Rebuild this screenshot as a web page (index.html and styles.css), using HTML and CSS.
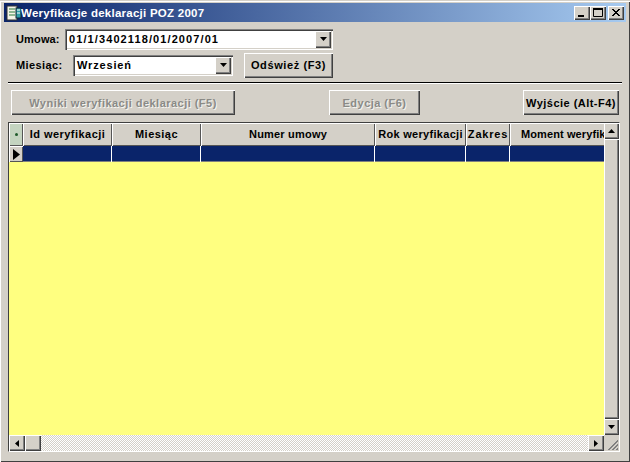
FILE: index.html
```html
<!DOCTYPE html>
<html lang="pl">
<head>
<meta charset="utf-8">
<title>Weryfikacje deklaracji POZ 2007</title>
<link rel="stylesheet" href="styles.css">
</head>
<body>
<div class="window">
  <div class="titlebar">
    <svg class="appicon" width="16" height="16" viewBox="0 0 16 16"><rect x="1" y="1" width="10" height="14" fill="#f4f4e8" stroke="#333"/><path d="M3 4h6M3 7h6M3 10h6" stroke="#2a7a3a"/><rect x="10" y="3" width="5" height="10" fill="#2f9fa8" stroke="#123"/><path d="M11 5h3M11 8h3" stroke="#fff"/></svg>
    <span class="title">Weryfikacje deklaracji POZ 2007</span>
    <div class="winbtns">
      <span class="winbtn"><svg width="16" height="14" viewBox="0 0 16 14"><rect x="4" y="9" width="6" height="2" fill="#000"/></svg></span>
      <span class="winbtn"><svg width="16" height="14" viewBox="0 0 16 14"><path d="M3.500 2.500h9v8h-9z" fill="none" stroke="#000"/><rect x="3" y="2" width="10" height="2" fill="#000"/></svg></span>
      <span class="winbtn close"><svg width="16" height="14" viewBox="0 0 16 14"><path d="M4 3l7 7M5 3l7 7M11 3l-7 7M12 3l-7 7" stroke="#000" fill="none"/></svg></span>
    </div>
  </div>
  <div class="form">
    <div class="row row-umowa">
      <span class="label label-umowa">Umowa:</span>
      <div class="combo combo-umowa"><span class="value value-umowa">01/1/3402118/01/2007/01</span><span class="ddbtn"><svg width="7" height="4" viewBox="0 0 7 4"><path d="M0 0h7L3.500 4z" fill="#000"/></svg></span></div>
    </div>
    <div class="row row-miesiac">
      <span class="label label-miesiac">Miesiąc:</span>
      <div class="combo combo-miesiac"><span class="value value-miesiac">Wrzesień</span><span class="ddbtn"><svg width="7" height="4" viewBox="0 0 7 4"><path d="M0 0h7L3.500 4z" fill="#000"/></svg></span></div>
      <button class="btn btn-refresh">Odśwież (F3)</button>
    </div>
    <div class="rule"></div>
    <div class="actions">
      <button class="btn btn-results" disabled>Wyniki weryfikacji deklaracji (F5)</button>
      <button class="btn btn-edit" disabled>Edycja (F6)</button>
      <button class="btn btn-exit">Wyjście (Alt-F4)</button>
    </div>
  </div>
  <div class="grid">
    <div class="grid-main">
      <div class="grid-data">
        <div class="g-row g-head">
          <div class="cell c0"><span class="dot"></span></div>
          <div class="cell c1">Id weryfikacji</div>
          <div class="cell c2">Miesiąc</div>
          <div class="cell c3">Numer umowy</div>
          <div class="cell c4">Rok weryfikacji</div>
          <div class="cell c5">Zakres</div>
          <div class="cell c6">Moment weryfikacji</div>
        </div>
        <div class="g-row g-sel">
          <div class="cell c0"><svg width="7" height="11" viewBox="0 0 7 11"><path d="M0 0l7 5.500L0 11z" fill="#000"/></svg></div>
          <div class="cell c1"></div><div class="cell c2"></div><div class="cell c3"></div><div class="cell c4"></div><div class="cell c5"></div><div class="cell c6"></div>
        </div>
        <div class="g-empty"></div>
      </div>
      <div class="vscroll">
        <span class="sbtn"><svg width="7" height="4" viewBox="0 0 7 4"><path d="M3.500 0L7 4H0z" fill="#000"/></svg></span>
        <span class="vtrack"></span>
        <span class="sbtn"><svg width="7" height="4" viewBox="0 0 7 4"><path d="M0 0h7L3.500 4z" fill="#000"/></svg></span>
      </div>
    </div>
    <div class="hscroll">
      <span class="sbtn"><svg width="4" height="7" viewBox="0 0 4 7"><path d="M4 0v7L0 3.500z" fill="#000"/></svg></span>
      <span class="sbtn thumb"></span>
      <span class="htrack"></span>
      <span class="sbtn"><svg width="4" height="7" viewBox="0 0 4 7"><path d="M0 0v7l4-3.500z" fill="#000"/></svg></span>
      <span class="grip"><svg width="13" height="13" viewBox="0 0 13 13"><path d="M12 2L2 12M12 3L3 12M12 6L6 12M12 7L7 12M12 10L10 12M12 11L11 12" stroke="#808080"/></svg></span>
    </div>
  </div>
</div>
</body>
</html>
```
FILE: styles.css
```css
* { box-sizing: border-box; }
html, body { margin: 0; padding: 0; }
body { width: 630px; height: 462px; overflow: hidden; font-family: "Liberation Sans", Arial, sans-serif; font-size: 11px; font-weight: 700; color: #000; }
.window { width: 630px; height: 462px; background: #d4d0c8; padding: 3px 4px 0 4px; border-top: 1px solid #d4d0c8; display: flex; flex-direction: column; box-shadow: inset 1px 1px 0 #fff, inset -1px -1px 0 #404040; }
.titlebar { height: 19px; margin-top: -1px; display: flex; align-items: center; padding: 0 2px; background: linear-gradient(90deg, #0a246a, #a6caf0); color: #fff; flex: none; }
.appicon { flex: none; }
.title { font-size: 11.5px; letter-spacing: 0.25px; white-space: nowrap; margin-left: -1px; }
.winbtns { margin-left: auto; display: flex; }
.winbtn { width: 16px; height: 14px; background: #d4d0c8; box-shadow: inset 1px 1px 0 #fff, inset -1px -1px 0 #404040, inset -2px -2px 0 #808080; display: block; }
.winbtn svg { display: block; }
.close { margin-left: 2px; }
.form { padding: 7px 0 0 12px; flex: none; }
.row { display: flex; align-items: center; }
.row-umowa { height: 20px; }
.row-miesiac { height: 24px; margin-top: 4px; }
.label { white-space: nowrap; flex: none; }
.label-umowa { width: 49px; letter-spacing: 0.15px; }
.label-miesiac { width: 57px; letter-spacing: 0.4px; }
.combo { height: 21px; background: #fff; display: flex; align-items: center; justify-content: space-between; padding: 2px; box-shadow: inset 1px 1px 0 #808080, inset 2px 2px 0 #404040, inset -1px -1px 0 #fff, inset -2px -2px 0 #d4d0c8; }
.combo-umowa { width: 268px; }
.combo-miesiac { width: 160px; }
.value { padding-left: 2px; white-space: nowrap; }
.value-umowa { letter-spacing: 1.1px; }
.value-miesiac { letter-spacing: 0.85px; }
.ddbtn { width: 16px; height: 17px; background: #d4d0c8; display: flex; align-items: center; justify-content: center; box-shadow: inset 1px 1px 0 #fff, inset -1px -1px 0 #404040, inset -2px -2px 0 #808080; }
.btn { font: inherit; letter-spacing: 0.47px; color: #000; background: #d4d0c8; border: 0; padding: 0; height: 25px; white-space: nowrap; box-shadow: inset 1px 1px 0 #fff, inset -1px -1px 0 #404040, inset -2px -2px 0 #808080; }
.btn:disabled { color: #8a8a86; text-shadow: 1px 1px 0 #f4f4f0; }
.btn-refresh { width: 89px; margin-left: 11px; letter-spacing: 0.6px; }
.rule { width: 614px; height: 1px; margin: 5px 0 0 -8px; background: #000; box-shadow: 0 1px 0 #fff; }
.actions { display: flex; margin-top: 7px; margin-left: -5px; }
.btn-results { width: 224px; }
.btn-edit { width: 91px; margin-left: 94px; }
.btn-exit { width: 96px; margin-left: 103px; }
.grid { margin: 7px 6px 0 4px; height: 330px; flex: none; display: flex; flex-direction: column; border: 1px solid #808080; border-top-color: #404040; border-left-color: #404040; border-right-color: #fff; border-bottom-color: #fff; }
.grid-main { display: flex; flex: 1; min-height: 0; }
.grid-data { width: 596px; background: #ffff80; display: flex; flex-direction: column; overflow: hidden; }
.g-row { display: flex; flex: none; }
.g-head { height: 23px; background: #d4d0c8; }
.g-head .cell { line-height: 22px; box-shadow: inset 1px 1px 0 #fff, inset -1px -1px 0 #555; text-align: center; letter-spacing: 0.47px; }
.g-sel { height: 16px; background: #0a246a; }
.g-sel .cell { box-shadow: inset -1px 0 0 #fff, inset 0 -1px 0 #808080; }
.g-sel .c0 { background: #d4d0c8; display: flex; align-items: center; justify-content: center; box-shadow: inset 1px 1px 0 #fff, inset -1px -1px 0 #555; }
.g-empty { flex: 1; }
.cell { flex: none; overflow: hidden; white-space: nowrap; }
.c0 { width: 14px; }
.c1 { width: 89px; }
.c2 { width: 89px; }
.c3 { width: 174px; }
.c4 { width: 91px; }
.c5 { width: 44px; }
.c6 { width: 95px; }
.g-head .c3 { letter-spacing: 0.2px; }
.g-head .c4 { letter-spacing: 0.3px; }
.g-head .c5 { letter-spacing: 0.8px; }
.g-head .c6 { text-align: left; padding-left: 11px; letter-spacing: 0.1px; }
.g-head .c0 { display: flex; align-items: center; justify-content: center; background: #c4d4c0; }
.dot { width: 3px; height: 3px; border-radius: 50%; background: #1e5a2a; }
.vscroll { width: 15px; display: flex; flex-direction: column; }
.sbtn { width: 15px; height: 16px; flex: none; background: #d4d0c8; display: flex; align-items: center; justify-content: center; box-shadow: inset 1px 1px 0 #fff, inset -1px -1px 0 #404040, inset -2px -2px 0 #808080; }
.vtrack { flex: 1; background: #d4d0c8; box-shadow: inset 1px 1px 0 #fff, inset -1px -1px 0 #404040, inset -2px -2px 0 #808080; }
.hscroll { height: 16px; flex: none; display: flex; background: #d4d0c8; }
.hscroll .sbtn { width: 16px; }
.htrack { flex: 1; background-color: #fff; background-image: conic-gradient(#d4d0c8 25%, #fff 0 50%, #d4d0c8 0 75%, #fff 0); background-size: 2px 2px; }
.grip { width: 15px; height: 16px; flex: none; display: flex; align-items: flex-end; justify-content: flex-end; }
.grip svg { display: block; }
```
